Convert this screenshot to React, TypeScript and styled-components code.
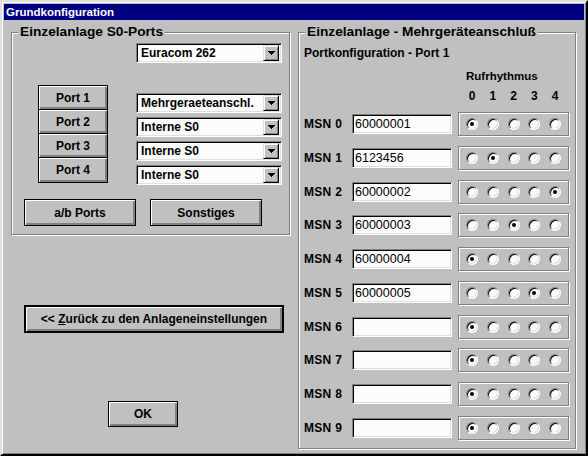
import React from "react";
import styled, { createGlobalStyle } from "styled-components";

// Styles
const GlobalStyle = createGlobalStyle`
  html, body {
    margin: 0;
    padding: 0;
    background: #c0c0c0;
  }
  body {
    font-family: "Liberation Sans", Arial, sans-serif;
  }
`;

const Window = styled.div`
  width: 588px;
  height: 456px;
  box-sizing: border-box;
  background: #c0c0c0;
  border: 2px solid;
  border-color: #dfdfdf #000 #000 #dfdfdf;
  box-shadow: inset 1px 1px 0 #fff, inset -1px -1px 0 #808080;
  padding: 2px;
  display: flex;
  flex-direction: column;
  font: bold 12px "Liberation Sans", Arial, sans-serif;
  color: #000;
`;

const TitleBar = styled.div`
  height: 16px;
  background: #000080;
  color: #fff;
  font-size: 11.5px;
  line-height: 16px;
  padding-left: 2px;
`;

const Body = styled.div`
  flex: 1;
  display: flex;
  gap: 8px;
  padding: 12px 0 0 7px;
`;

const LeftColumn = styled.div`
  width: 279px;
  display: flex;
  flex-direction: column;
  align-items: flex-start;
`;

const GroupBox = styled.div<{ $w: number; $h: number }>`
  position: relative;
  width: ${(p) => p.$w}px;
  height: ${(p) => p.$h}px;
  box-sizing: border-box;
  border: 1px solid #808080;
  box-shadow: 1px 1px 0 #fff, inset 1px 1px 0 #fff;
  display: flex;
  flex-direction: column;
  align-items: flex-start;
`;

const GroupLabel = styled.span`
  position: absolute;
  top: -9px;
  left: 6px;
  padding: 0 2px;
  background: #c0c0c0;
  font-size: 13.7px;
  line-height: 16px;
  white-space: nowrap;
`;

const Combo = styled.div<{ $mt?: number; $ml?: number }>`
  width: 146px;
  height: 20px;
  margin-top: ${(p) => p.$mt ?? 0}px;
  margin-left: ${(p) => p.$ml ?? 0}px;
  box-sizing: border-box;
  border: 1px solid;
  border-color: #808080 #fff #fff #808080;
  box-shadow: inset 1px 1px 0 #000, inset -1px -1px 0 #dfdfdf;
  background: #fcfcfc;
  display: flex;
  align-items: center;
  padding: 1px 2px 1px 4px;
`;

const ComboText = styled.span`
  flex: 1;
  white-space: nowrap;
  line-height: 14px;
`;

const ComboArrow = styled.span`
  width: 16px;
  height: 16px;
  box-sizing: border-box;
  background: #c0c0c0;
  border: 1px solid;
  border-color: #dfdfdf #000 #000 #dfdfdf;
  box-shadow: inset 1px 1px 0 #fff, inset -1px -1px 0 #808080;
  display: flex;
  align-items: center;
  justify-content: center;
`;

const PortArea = styled.div`
  display: flex;
  align-items: flex-start;
  gap: 28px;
  margin: 22px 0 0 26px;
`;

const PortStack = styled.div`
  width: 70px;
  box-sizing: border-box;
  border: 1px solid #000;
  display: flex;
  flex-direction: column;
`;

const PortButton = styled.button`
  height: 24px;
  box-sizing: border-box;
  margin: 0;
  padding: 0;
  border: 0;
  border-bottom: 1px solid #000;
  background: #c0c0c0;
  box-shadow: inset 1px 1px 0 #fff, inset -2px -2px 0 #808080;
  font: inherit;
  color: #000;
  &:last-child {
    border-bottom: 0;
  }
`;

const ComboColumn = styled.div`
  display: flex;
  flex-direction: column;
  gap: 4px;
  padding-top: 8px;
`;

const ButtonRow = styled.div`
  display: flex;
  gap: 14px;
  margin: 14px 0 0 12px;
`;

const PushButton = styled.button<{ $w: number; $h: number; $mt?: number; $ml?: number; $default?: boolean }>`
  width: ${(p) => p.$w}px;
  height: ${(p) => p.$h}px;
  margin: ${(p) => p.$mt ?? 0}px 0 0 ${(p) => p.$ml ?? 0}px;
  padding: 0;
  box-sizing: border-box;
  border: ${(p) => (p.$default ? 2 : 1)}px solid #000;
  background: #c0c0c0;
  box-shadow: inset 1px 1px 0 #fff, inset -2px -2px 0 #808080;
  font: inherit;
  color: #000;
  white-space: nowrap;
`;

const SubTitle = styled.div`
  margin: 13px 0 0 5px;
  line-height: 14px;
`;

const Header = styled.div`
  margin-left: 159px;
  width: 111px;
`;

const HeaderTitle = styled.div`
  margin-top: 9px;
  padding-left: 8px;
  line-height: 14px;
  font-size: 11.5px;
`;

const DigitRow = styled.div`
  margin-top: 6px;
  padding: 0 8px;
  display: flex;
  justify-content: space-between;
  line-height: 14px;
`;

const Digit = styled.span`
  width: 12px;
  text-align: center;
`;

const Rows = styled.div`
  margin-top: 9px;
  display: flex;
  flex-direction: column;
  gap: 9.78px;
`;

const Row = styled.div`
  height: 24px;
  display: flex;
  align-items: center;
  padding-left: 5px;
`;

const MsnLabel = styled.span`
  width: 48px;
  letter-spacing: 0.3px;
`;

const MsnInput = styled.input`
  width: 100px;
  height: 20px;
  margin: 0 6px 0 0;
  box-sizing: border-box;
  border: 1px solid;
  border-color: #808080 #fff #fff #808080;
  box-shadow: inset 1px 1px 0 #000, inset -1px -1px 0 #dfdfdf;
  background: #fcfcfc;
  padding: 0 0 0 2px;
  font: 12.5px "Liberation Sans", Arial, sans-serif;
  color: #000;
  outline: none;
`;

const RadioBox = styled.div`
  width: 111px;
  height: 24px;
  box-sizing: border-box;
  border: 1px solid #808080;
  box-shadow: 1px 1px 0 #fff, inset 1px 1px 0 #fff;
  padding: 0 7px;
  display: flex;
  align-items: center;
  justify-content: space-between;
`;

const Radio = styled.span<{ $on: boolean }>`
  width: 12px;
  height: 12px;
  box-sizing: border-box;
  border-radius: 50%;
  border: 1px solid;
  border-color: #808080 #fff #fff #808080;
  background: #fcfcfc;
  box-shadow: inset 1px 1px 0 #000, inset -1px -1px 0 #dfdfdf;
  display: flex;
  align-items: center;
  justify-content: center;
  &::after {
    content: "";
    width: 4px;
    height: 4px;
    border-radius: 50%;
    background: #000;
    display: ${(p) => (p.$on ? "block" : "none")};
  }
`;

const Arrow = () => (
  <svg width="7" height="4" viewBox="0 0 7 4" shapeRendering="crispEdges">
    <polygon points="0,0 7,0 3.5,4" fill="#000" />
  </svg>
);

const msns: { value: string; sel: number }[] = [
  { value: "60000001", sel: 0 },
  { value: "6123456", sel: 1 },
  { value: "60000002", sel: 4 },
  { value: "60000003", sel: 2 },
  { value: "60000004", sel: 0 },
  { value: "60000005", sel: 3 },
  { value: "", sel: 0 },
  { value: "", sel: 0 },
  { value: "", sel: 0 },
  { value: "", sel: 0 },
];

const portModes = ["Mehrgeraeteanschl.", "Interne S0", "Interne S0", "Interne S0"];

const ComboBox = ({ text, mt, ml }: { text: string; mt?: number; ml?: number }) => (
  <Combo $mt={mt} $ml={ml}>
    <ComboText>{text}</ComboText>
    <ComboArrow>
      <Arrow />
    </ComboArrow>
  </Combo>
);

export default function App() {
  return (
    <>
      <GlobalStyle />
      <Window>
        <TitleBar>Grundkonfiguration</TitleBar>
        <Body>
          <LeftColumn>
            <GroupBox $w={279} $h={203}>
              <GroupLabel>Einzelanlage S0-Ports</GroupLabel>
              <ComboBox text="Euracom 262" mt={10} ml={124} />
              <PortArea>
                <PortStack>
                  {[1, 2, 3, 4].map((n) => (
                    <PortButton key={n}>Port {n}</PortButton>
                  ))}
                </PortStack>
                <ComboColumn>
                  {portModes.map((m, i) => (
                    <ComboBox key={i} text={m} />
                  ))}
                </ComboColumn>
              </PortArea>
              <ButtonRow>
                <PushButton $w={112} $h={27}>a/b Ports</PushButton>
                <PushButton $w={112} $h={27}>Sonstiges</PushButton>
              </ButtonRow>
            </GroupBox>
            <PushButton $w={260} $h={28} $mt={70} $ml={13} $default>
              &lt;&lt; <u>Z</u>urück zu den Anlageneinstellungen
            </PushButton>
            <PushButton $w={70} $h={26} $mt={68} $ml={97}>
              OK
            </PushButton>
          </LeftColumn>
          <GroupBox $w={278} $h={417}>
            <GroupLabel>Einzelanlage - Mehrgeräteanschluß</GroupLabel>
            <SubTitle>Portkonfiguration - Port 1</SubTitle>
            <Header>
              <HeaderTitle>Rufrhythmus</HeaderTitle>
              <DigitRow>
                {[0, 1, 2, 3, 4].map((d) => (
                  <Digit key={d}>{d}</Digit>
                ))}
              </DigitRow>
            </Header>
            <Rows>
              {msns.map((m, i) => (
                <Row key={i}>
                  <MsnLabel>MSN {i}</MsnLabel>
                  <MsnInput readOnly value={m.value} />
                  <RadioBox>
                    {[0, 1, 2, 3, 4].map((r) => (
                      <Radio key={r} $on={r === m.sel} />
                    ))}
                  </RadioBox>
                </Row>
              ))}
            </Rows>
          </GroupBox>
        </Body>
      </Window>
    </>
  );
}
